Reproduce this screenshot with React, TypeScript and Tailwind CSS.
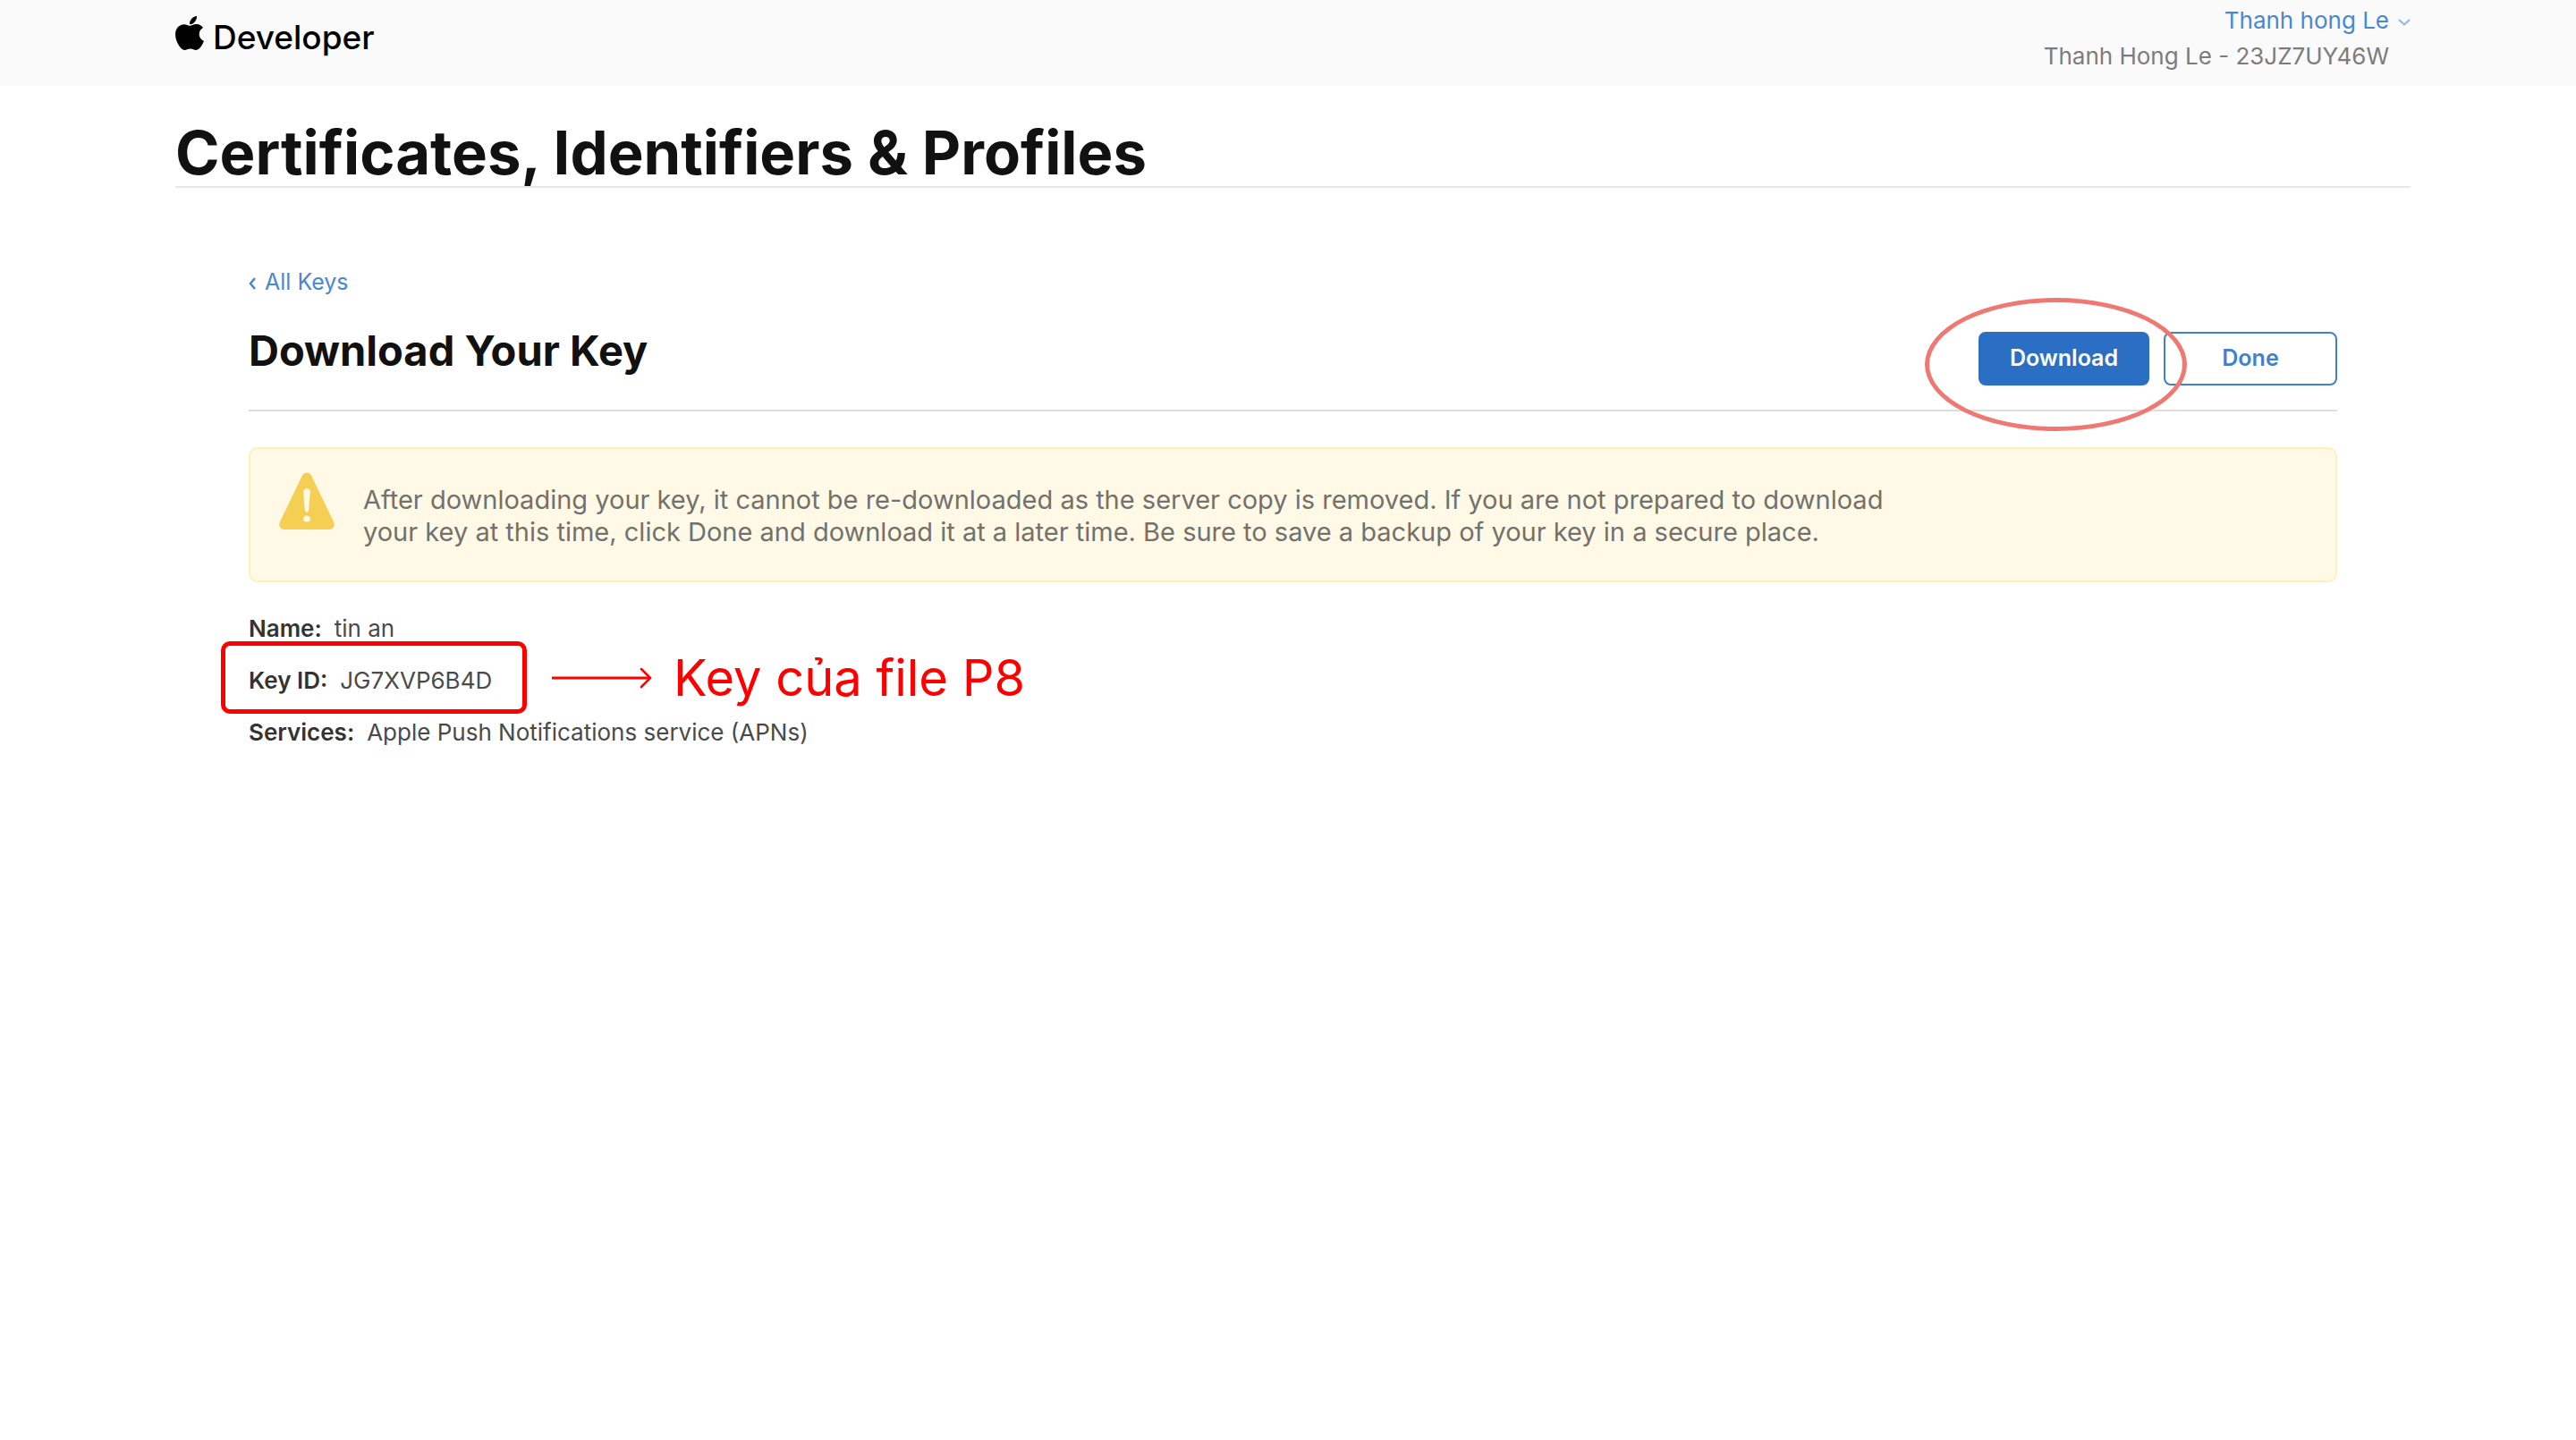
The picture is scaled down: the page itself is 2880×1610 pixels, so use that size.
function AppleLogo() {
  return (
    <svg viewBox="4 32 376 448" className="h-[38px] w-8 shrink-0" fill="#000" aria-hidden="true">
      <path d="M318.7 268.7c-.2-36.7 16.4-64.4 50-84.8-18.8-26.9-47.2-41.7-84.7-44.6-35.5-2.8-74.3 20.7-88.5 20.7-15 0-49.4-19.7-76.4-19.7C63.3 141.2 4 184.8 4 273.5q0 39.3 14.4 81.2c12.8 36.7 59 126.7 107.2 125.2 25.2-.6 43-17.9 75.8-17.9 31.8 0 48.3 17.9 76.4 17.9 48.6-.7 90.4-82.5 102.6-119.3-65.2-30.7-61.7-90-61.7-91.9zm-56.6-164.2c27.3-32.4 24.8-61.9 24-72.5-24.1 1.4-52 16.4-67.9 34.9-17.5 19.8-27.8 44.3-25.6 71.9 26.1 2 49.9-11.4 69.5-34.3z" />
    </svg>
  );
}

function WarningIcon() {
  return (
    <svg viewBox="0 0 64 72" preserveAspectRatio="none" className="mt-px h-16 w-[62px] shrink-0" aria-hidden="true">
      <path
        d="M27 3.6C29 -.4 35 -.4 37 3.6L63 62.5C65.3 67.5 62 72 57 72H7C2 72 -1.3 67.5 1 62.5Z"
        fill="#f4cf54"
      />
      <path d="M28 24.5C28 22 29.8 20.5 32 20.5S36 22 36 24.5L34.3 47C34 51.5 30 51.5 29.7 47Z" fill="#fff9e6" />
      <circle cx="32" cy="58.5" r="4" fill="#fff9e6" />
    </svg>
  );
}

function Header() {
  return (
    <header className="flex h-24 items-start justify-between bg-[#fafafa] pl-[196px] pr-[185px]">
      <a href="#" className="flex items-start gap-2.5 pt-[18px] text-[37px] font-medium leading-[48px] text-black">
        <AppleLogo />
        Developer
      </a>
      <div className="flex flex-col items-end pt-[3px] text-[26px] leading-10">
        <button type="button" className="flex items-center gap-2.5 text-[#4a87d3]">
          Thanh hong Le
          <svg viewBox="0 0 14 8" className="mt-1 h-2 w-3.5" fill="none" stroke="#8fb5e4" strokeWidth="2" aria-hidden="true">
            <path d="M1 1L7 6.5L13 1" />
          </svg>
        </button>
        <p className="pr-6 text-[#7c7c7c]">Thanh Hong Le - 23JZ7UY46W</p>
      </div>
    </header>
  );
}

function KeyAnnotation() {
  return (
    <div className="pointer-events-none absolute -left-[31px] -top-[15px] flex items-center text-[#ff0000]">
      <div className="h-[81px] w-[342px] rounded-[10px] border-5 border-[#ff0000]" />
      <svg viewBox="0 0 112 24" className="ml-7 h-6 w-28 shrink-0" fill="none" stroke="currentColor" aria-hidden="true">
        <path d="M0 12H110" strokeWidth="3" />
        <path d="M100 2L110 12L100 22" strokeWidth="2.5" strokeLinecap="round" strokeLinejoin="round" />
      </svg>
      <p className="ml-6 whitespace-nowrap text-[56px] leading-[66px]">Key của file P8</p>
    </div>
  );
}

const details = [
  { label: "Name:", value: "tin an", marked: false },
  { label: "Key ID:", value: "JG7XVP6B4D", marked: true },
  { label: "Services:", value: "Apple Push Notifications service (APNs)", marked: false },
];

export default function App() {
  return (
    <div className="min-h-screen bg-white font-['Inter','Liberation_Sans',sans-serif] text-[#111]">
      <Header />
      <main className="pl-[196px] pr-[185px] pt-[37px]">
        <h1 className="border-b-2 border-[#e8e8e8] text-[67px] font-bold leading-[75px]">
          Certificates, Identifiers &amp; Profiles
        </h1>
        <div className="px-[82px] pt-[90px]">
          <a href="#" className="flex w-fit items-center gap-2.5 text-[25px] leading-[30px] text-[#4a87d3]">
            <svg viewBox="0 0 8 14" className="mt-1 h-3.5 w-2" fill="none" stroke="currentColor" strokeWidth="2.5" aria-hidden="true">
              <path d="M7 1L2 7L7 13" />
            </svg>
            All Keys
          </a>

          <div className="mt-[33px] flex items-start justify-between border-b-2 border-[#dfdfdf] pb-[27px]">
            <h2 className="text-[47px] font-bold leading-[58px]">Download Your Key</h2>
            <div className="mt-2 flex gap-4 text-[25px] font-semibold leading-[30px]">
              <div className="relative">
                <button type="button" className="h-[60px] w-[191px] rounded-lg bg-[#2b6fc4] pb-0.5 text-white">
                  Download
                </button>
                <div className="pointer-events-none absolute -left-[60px] -top-[38px] z-10 h-[149px] w-[293px] rounded-[50%] border-5 border-[#f07872]" />
              </div>
              <button type="button" className="h-[60px] w-[194px] rounded-lg border-2 border-[#3f80cf] pb-0.5 text-[#3f80cf]">
                Done
              </button>
            </div>
          </div>

          <div className="mt-10 flex items-start gap-8 rounded-[10px] border-2 border-[#fdf0c0] bg-[#fff9e6] px-8 pb-9 pt-[25px]">
            <WarningIcon />
            <p className="mt-3.5 max-w-[1740px] text-[29px] leading-9 text-[#72716c]">
              After downloading your key, it cannot be re-downloaded as the server copy is removed. If you are not
              prepared to download your key at this time, click Done and download it at a later time. Be sure to save a
              backup of your key in a secure place.
            </p>
          </div>

          <dl className="mt-[23px] text-[26px] leading-[58px]">
            {details.map((d) => (
              <div key={d.label} className="relative flex w-fit gap-3.5">
                <dt className="font-semibold text-[#333]">{d.label}</dt>
                <dd className="text-[#4a4a4a]">{d.value}</dd>
                {d.marked && <KeyAnnotation />}
              </div>
            ))}
          </dl>
        </div>
      </main>
    </div>
  );
}
